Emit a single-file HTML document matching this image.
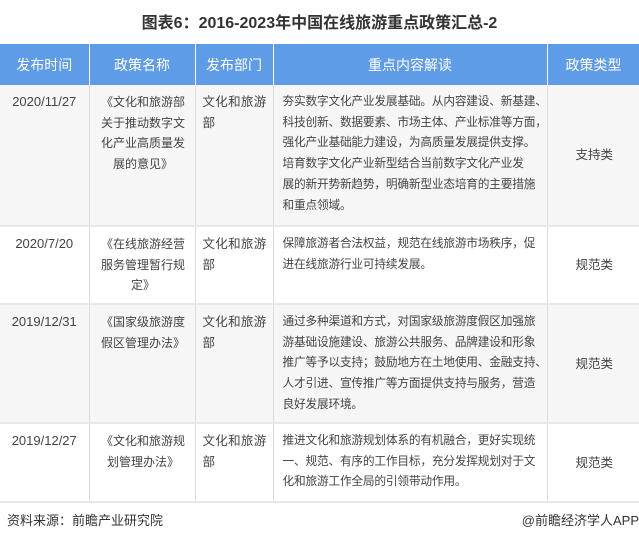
<!DOCTYPE html>
<html><head><meta charset="utf-8"><style>
body{margin:0;width:639px;height:541px;background:#fff;font-family:"Liberation Sans","Noto Sans CJK SC",sans-serif;color:#444;overflow:hidden;position:relative}
.t{position:absolute;top:9px;left:0;width:639px;text-align:center;font-weight:bold;font-size:16px;color:#333}
table{position:absolute;top:44px;left:0;border-collapse:collapse;table-layout:fixed;width:640px}
th{background:#5e9ce8;color:#fff;font-weight:normal;font-size:14px;height:41px;border-right:1px solid #fff;padding:0}
td{font-size:12px;line-height:20.7px;vertical-align:top;border-right:1px solid #ddd;border-bottom:2px solid #e8e8e8;padding:7px 6px 6px 7px;box-sizing:border-box}
td:last-child{border-right:none}
tr.g td{background:#f6f6f6}
.d{text-align:center;font-size:13px;padding-left:2px;padding-right:2px}
.n{text-align:center;padding-left:10px;padding-right:8px}
.b{letter-spacing:0.3px;font-size:12.5px;padding-right:1px}
.k{padding-left:9px!important;padding-right:0;white-space:nowrap;font-size:11.7px;letter-spacing:-0.2px}
.m{vertical-align:middle;text-align:center;font-size:12.5px}
.f{position:absolute;top:510px;font-size:13px;color:#333}
</style></head><body>
<div class="t">图表6：2016-2023年中国在线旅游重点政策汇总-2</div>
<table>
<colgroup><col style="width:89px"><col style="width:106px"><col style="width:78px"><col style="width:274px"><col style="width:93px"></colgroup>
<tr><th>发布时间</th><th>政策名称</th><th>发布部门</th><th>重点内容解读</th><th>政策类型</th></tr>
<tr class="g" style="height:141px"><td class="d">2020/11/27</td><td class="n">《文化和旅游部关于推动数字文化产业高质量发展的意见》</td><td class="b">文化和旅游部</td><td class="k">夯实数字文化产业发展基础。从内容建设、新基建、<br>科技创新、数据要素、市场主体、产业标准等方面，<br>强化产业基础能力建设，为高质量发展提供支撑。<br>培育数字文化产业新型结合当前数字文化产业发<br>展的新开势新趋势，明确新型业态培育的主要措施<br>和重点领域。</td><td class="m">支持类</td></tr>
<tr style="height:78px"><td class="d">2020/7/20</td><td class="n">《在线旅游经营服务管理暂行规定》</td><td class="b">文化和旅游部</td><td class="k">保障旅游者合法权益，规范在线旅游市场秩序，促<br>进在线旅游行业可持续发展。</td><td class="m">规范类</td></tr>
<tr class="g" style="height:119px"><td class="d">2019/12/31</td><td class="n">《国家级旅游度假区管理办法》</td><td class="b">文化和旅游部</td><td class="k">通过多种渠道和方式，对国家级旅游度假区加强旅<br>游基础设施建设、旅游公共服务、品牌建设和形象<br>推广等予以支持；鼓励地方在土地使用、金融支持、<br>人才引进、宣传推广等方面提供支持与服务，营造<br>良好发展环境。</td><td class="m">规范类</td></tr>
<tr style="height:79px"><td class="d">2019/12/27</td><td class="n">《文化和旅游规划管理办法》</td><td class="b">文化和旅游部</td><td class="k">推进文化和旅游规划体系的有机融合，更好实现统<br>一、规范、有序的工作目标，充分发挥规划对于文<br>化和旅游工作全局的引领带动作用。</td><td class="m">规范类</td></tr>
</table>
<div class="f" style="left:7px">资料来源：前瞻产业研究院</div>
<div class="f" style="right:0">@前瞻经济学人APP</div>
</body></html>
